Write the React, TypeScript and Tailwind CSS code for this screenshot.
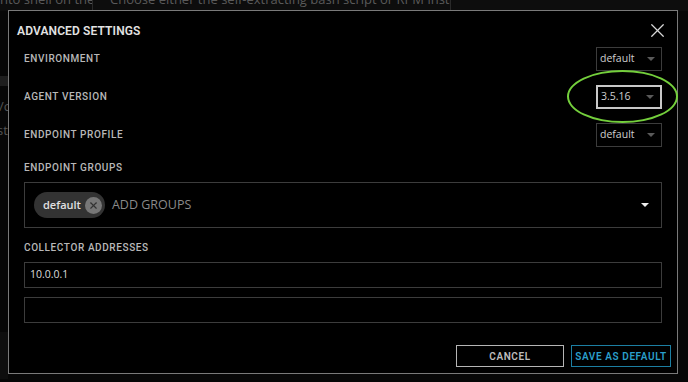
import { X } from "lucide-react"

const label = "font-['Roboto',sans-serif] text-[10px] font-medium tracking-[0.06em] text-[#b8b8b8] uppercase"

function Select({ value, focused }: { value: string; focused?: boolean }) {
  return (
    <div
      className={`flex h-[24px] w-[66px] items-center justify-between pl-[3px] pr-[6px] font-['Open_Sans',sans-serif] text-[10.5px] text-[#cfcfcf] ${
        focused ? "border-2 border-[#c8c8c8] pl-[2px]" : "border border-[#3c3c3c]"
      }`}
    >
      <span>{value}</span>
      <span className="h-0 w-0 border-x-[4px] border-t-[4px] border-x-transparent border-t-[#5a5a5a]" />
    </div>
  )
}

function Row({ name, value, focused }: { name: string; value: string; focused?: boolean }) {
  return (
    <div className="flex h-[24px] items-center justify-between">
      <span className={`${label} -mt-[1px]`}>{name}</span>
      <Select value={value} focused={focused} />
    </div>
  )
}

export default function App() {
  return (
    <div className="relative h-[382px] w-[688px] overflow-hidden bg-[#070707]">
      {/* page behind the modal */}
      <div className="flex h-[11px] items-end font-['Open_Sans',sans-serif] text-[13px] leading-[16px] text-[#5a5a5a]">
        <div className="h-full w-[93px] overflow-hidden border-r border-[#2a2a2a] bg-[#0d0d0d]">
          <p className="-mt-[9px] whitespace-nowrap">nto shell on the</p>
        </div>
        <div className="h-full w-[358px] overflow-hidden border-r border-[#2a2a2a] bg-[#0d0d0d] pl-[17px]">
          <p className="-mt-[9px] whitespace-nowrap">Choose either the self-extracting bash script or RPM installer.</p>
        </div>
        <div className="h-full flex-1 bg-[#0d0d0d]" />
      </div>
      <div className="mt-[65px] h-[10px] w-[8px] bg-[#1e1e1e]" />
      <div className="mt-[8px] w-[8px] overflow-hidden font-['Open_Sans',sans-serif] text-[13px] leading-[24px] text-[#555]">
        <p className="-ml-[1px]">/c</p>
        <p className="-ml-[3px]">st</p>
      </div>
      <div className="mt-[190px] h-[47px] w-[8px] bg-[#0e0e0e]" />

      {/* modal */}
      <div className="absolute left-[8px] top-[10px] flex h-[364px] w-[670px] flex-col border border-[#7a7a7a] bg-black">
        <div className="flex h-[36px] items-start justify-between pl-[8px] pr-[8px] pt-[12px]">
          <h2 className="font-['Roboto',sans-serif] text-[12px] font-semibold leading-[16px] tracking-[0.01em] text-[#e2e2e2]">
            ADVANCED SETTINGS
          </h2>
          <X className="-mt-[4px] h-[23px] w-[23px] text-[#d8d8d8]" strokeWidth={1.3} />
        </div>

        <div className="flex flex-col px-[15px]">
          <div className="flex flex-col gap-[14px]">
            <Row name="Environment" value="default" />
            <Row name="Agent Version" value="3.5.16" focused />
            <Row name="Endpoint Profile" value="default" />
          </div>

          <span className={`${label} mt-[14px] leading-[14px]`}>Endpoint Groups</span>
          <div className="mt-[7px] flex h-[46px] items-center border border-[#3c3c3c] pl-[9px] pr-[12px]">
            <div className="flex h-[26px] items-center gap-[4px] rounded-full bg-[#333] pl-[9px] pr-[3px]">
              <span className="font-['Open_Sans',sans-serif] text-[11px] font-semibold text-[#e0e0e0]">default</span>
              <span className="flex h-[17px] w-[17px] items-center justify-center rounded-full bg-[#777]">
                <X className="h-[11px] w-[11px] text-[#333]" strokeWidth={2.5} />
              </span>
            </div>
            <span className="ml-[7px] flex-1 font-['Open_Sans',sans-serif] text-[12.5px] text-[#8a8a8a]">ADD GROUPS</span>
            <span className="h-0 w-0 border-x-[4px] border-t-[4px] border-x-transparent border-t-[#eeeeee]" />
          </div>

          <span className={`${label} mt-[13px] leading-[14px]`}>Collector Addresses</span>
          <div className="mt-[7px] flex h-[26px] items-center border border-[#3c3c3c] pl-[5px] font-['Open_Sans',sans-serif] text-[10.5px] text-[#dcdcdc]">
            10.0.0.1
          </div>
          <div className="mt-[9px] h-[26px] border border-[#3c3c3c]" />
        </div>

        <div className="mt-[22px] flex justify-end gap-[7px] pr-[6px] font-['Roboto',sans-serif] text-[10px] font-semibold tracking-[0.06em] whitespace-nowrap">
          <button className="h-[22px] w-[108px] border border-[#b5b5b5] text-[#bdbdbd]">CANCEL</button>
          <button className="h-[22px] w-[100px] border border-[#1c7fa3] text-[#2a9fcb]">SAVE AS DEFAULT</button>
        </div>
      </div>

      {/* highlight ring */}
      <div className="absolute left-[567px] top-[70px] h-[53px] w-[111px] rounded-[50%] border-2 border-[#74cf3c]" />
    </div>
  )
}
